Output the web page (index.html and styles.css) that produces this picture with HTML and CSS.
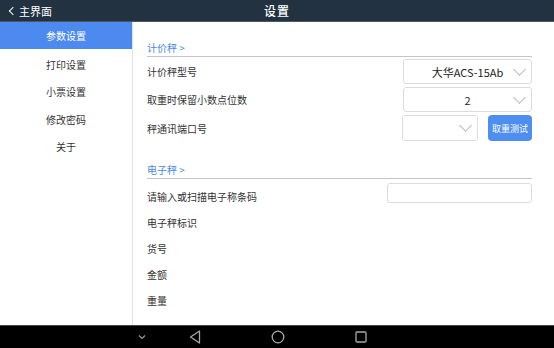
FILE: index.html
```html
<!DOCTYPE html>
<html lang="zh">
<head>
    <meta charset="UTF-8">
    <title>设置</title>
    <link rel="stylesheet" href="styles.css">
</head>
<body>
    <div class="app">
        <div class="topbar">
            <div class="back"><span class="back-arrow"></span>主界面</div>
            <h1>设置</h1>
        </div>

        <div class="main">
            <ul class="menu">
                <li class="active">参数设置</li>
                <li>打印设置</li>
                <li>小票设置</li>
                <li>修改密码</li>
                <li>关于</li>
            </ul>

            <div class="content">
                <div class="section-title">计价秤 &gt;</div>
                <div class="row">
                    <span class="label">计价秤型号</span>
                    <div class="select wide">大华ACS-15Ab<span class="chev"></span></div>
                </div>
                <div class="row">
                    <span class="label">取重时保留小数点位数</span>
                    <div class="select wide">2<span class="chev"></span></div>
                </div>
                <div class="row tall">
                    <span class="label">秤通讯端口号</span>
                    <div class="port">
                        <div class="select small"><span class="chev"></span></div>
                        <button class="btn">取重测试</button>
                    </div>
                </div>

                <div class="section-title second">电子秤 &gt;</div>
                <div class="row input-row">
                    <span class="label">请输入或扫描电子称条码</span>
                    <input class="code-input" type="text">
                </div>
                <div class="row plain"><span class="label">电子秤标识</span></div>
                <div class="row plain"><span class="label">货号</span></div>
                <div class="row plain"><span class="label">金额</span></div>
                <div class="row plain"><span class="label">重量</span></div>
            </div>
        </div>

        <div class="navbar">
            <svg class="nav-down" width="10" height="6" viewBox="0 0 10 6"><path d="M2 1.5 L5 4.5 L8 1.5" fill="none" stroke="#9a9a9a" stroke-width="1.2"/></svg>
            <svg class="nav-back" width="12" height="14" viewBox="0 0 12 14"><path d="M10.5 1 L10.5 13 L1.5 7 Z" fill="none" stroke="#a8a8a8" stroke-width="1.3" stroke-linejoin="round"/></svg>
            <svg class="nav-home" width="14" height="14" viewBox="0 0 14 14"><circle cx="7" cy="7" r="5.8" fill="none" stroke="#a8a8a8" stroke-width="1.3"/></svg>
            <svg class="nav-recent" width="12" height="12" viewBox="0 0 12 12"><rect x="1" y="1" width="10" height="10" rx="1" fill="none" stroke="#a8a8a8" stroke-width="1.3"/></svg>
        </div>
    </div>
</body>
</html>
```

FILE: styles.css
```css
* {
    box-sizing: border-box;
}

html, body {
    margin: 0;
    padding: 0;
    height: 100%;
}

body {
    font-family: "Noto Sans CJK SC", "Noto Sans", sans-serif;
    font-size: 10px;
    color: #333;
    background: #fff;
    overflow: hidden;
}

.app {
    width: 554px;
    height: 348px;
    display: flex;
    flex-direction: column;
}

/*--------------------
Top bar
--------------------*/
.topbar {
    flex: 0 0 22px;
    background: #233240;
    color: #fff;
    position: relative;
    display: flex;
    align-items: center;
    justify-content: center;
    border-bottom: 1px solid #4a5866;
}

.topbar h1 {
    margin: 0;
    font-size: 12px;
    font-weight: 500;
    letter-spacing: 1px;
}

.back {
    position: absolute;
    left: 8px;
    top: 0;
    height: 21px;
    display: flex;
    align-items: center;
    font-size: 11px;
}

.back-arrow {
    width: 6px;
    height: 6px;
    border-left: 1.5px solid #fff;
    border-bottom: 1.5px solid #fff;
    transform: rotate(45deg);
    margin-right: 3px;
    margin-left: 2px;
}

/*--------------------
Body
--------------------*/
.main {
    flex: 1 1 auto;
    display: flex;
    min-height: 0;
}

.menu {
    width: 133px;
    margin: 0;
    padding: 0;
    list-style: none;
    border-right: 1px solid #e2e2e2;
}

.menu li {
    height: 27.3px;
    line-height: 31px;
    text-align: center;
    color: #333;
}

.menu li.active {
    height: 27px;
    line-height: 27px;
    background: #4d8af0;
    color: #fff;
}

.content {
    flex: 1 1 auto;
    padding: 18px 22px 0 14px;
}

.section-title {
    height: 17px;
    line-height: 16px;
    color: #4a88e0;
    border-bottom: 1px solid #c4c4c4;
    margin-bottom: 2px;
}

.section-title.second {
    margin-top: 21px;
    margin-bottom: 4px;
}

.row {
    display: flex;
    align-items: center;
    justify-content: space-between;
    height: 25px;
    margin-bottom: 3px;
}

.row.tall {
    height: 26px;
}

.label {
    color: #333;
}

.select {
    position: relative;
    height: 100%;
    border: 1px solid #dcdcdc;
    border-radius: 3px;
    font-size: 11px;
    color: #222;
    display: flex;
    align-items: center;
    justify-content: center;
}

.select.wide {
    width: 129px;
}

.select.small {
    width: 76px;
}

.chev {
    position: absolute;
    right: 7px;
    top: 50%;
    width: 9px;
    height: 9px;
    margin-top: -7px;
    border-right: 1px solid #b8b8b8;
    border-bottom: 1px solid #b8b8b8;
    transform: rotate(45deg);
}

.port {
    display: flex;
    gap: 10px;
    height: 100%;
}

.btn {
    width: 44px;
    height: 100%;
    border: none;
    border-radius: 4px;
    background: #4d8ef0;
    color: #fff;
    font-family: inherit;
    font-size: 9px;
    padding: 0;
}

.input-row {
    height: 26px;
    align-items: flex-start;
    margin-bottom: 0;
}

.input-row .label {
    line-height: 26px;
    margin-top: 1px;
}

.code-input {
    width: 145px;
    height: 20px;
    border: 1px solid #dcdcdc;
    border-radius: 3px;
    outline: none;
}

.row.plain {
    height: 26px;
    margin-bottom: 0;
}

/*--------------------
Nav bar
--------------------*/
.navbar {
    flex: 0 0 23px;
    background: #000;
    border-top: 1px solid #444;
    position: relative;
}

.navbar svg {
    position: absolute;
}

.nav-down {
    left: 137px;
    top: 8px;
}

.nav-back {
    left: 189px;
    top: 4px;
}

.nav-home {
    left: 271px;
    top: 4px;
}

.nav-recent {
    left: 355px;
    top: 5px;
}
```
